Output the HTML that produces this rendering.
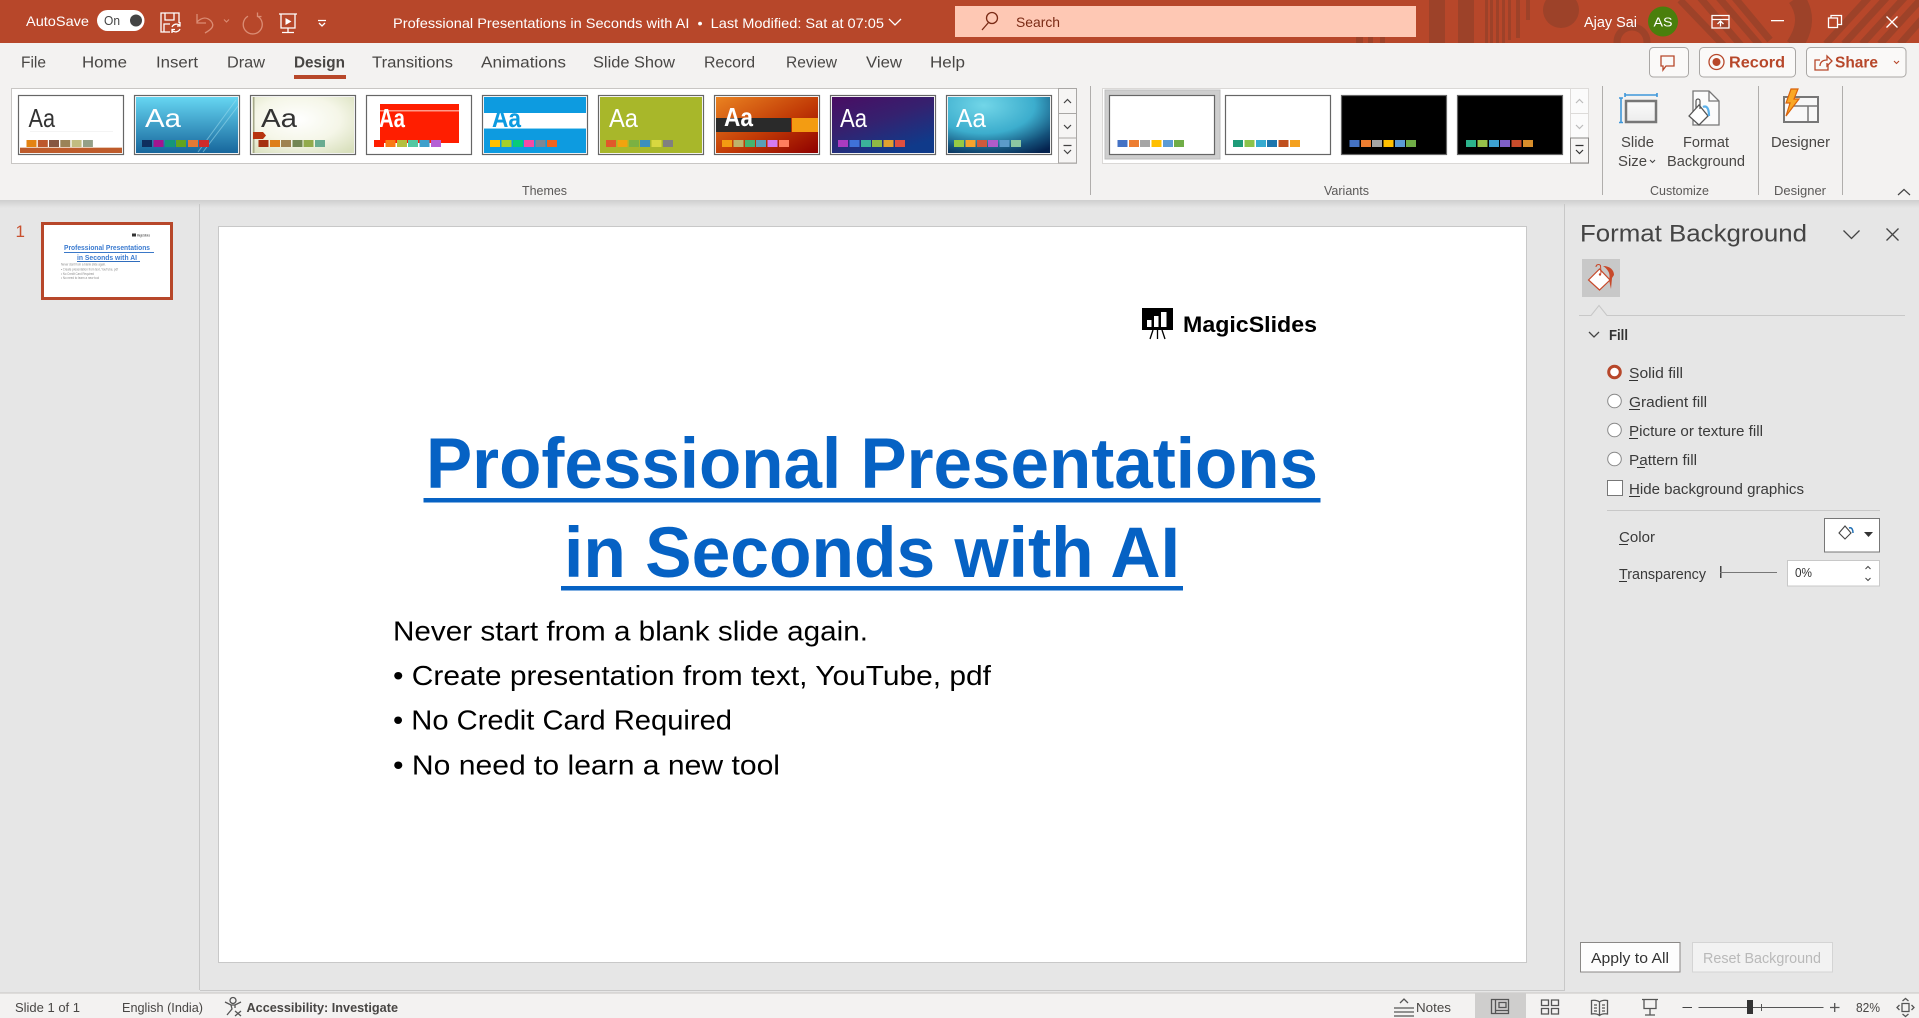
<!DOCTYPE html>
<html lang="en"><head><meta charset="utf-8"><title>Professional Presentations in Seconds with AI</title>
<style>
html,body{margin:0;padding:0;width:1919px;height:1018px;overflow:hidden;background:#e6e6e6}
svg{display:block}
text{font-family:"Liberation Sans",sans-serif;white-space:pre}
.w{fill:#fff}.g{fill:#444}.d{fill:#333}
.tab{font-size:15.5px;fill:#484644}
.rl{font-size:15px;fill:#484644}
.gl{font-size:12.5px;fill:#5a5857}
.st{font-size:13px;fill:#484644}
.pl{font-size:14.5px;fill:#3a3a3a}
.aa{font-size:26px}
.s{fill:none;stroke:#fff;stroke-width:1.3}
.ic{fill:none;stroke:#555;stroke-width:1.3}
.p{fill:#9d4229}
.th{fill:#fff;stroke:#666;stroke-width:1.2}
</style></head><body>
<svg width="1919" height="1018" viewBox="0 0 1919 1018" xmlns="http://www.w3.org/2000/svg">
<defs>
<linearGradient id="g2" x1="0" y1="0" x2="0" y2="1"><stop offset="0" stop-color="#66d6f2"/><stop offset="1" stop-color="#17669c"/></linearGradient>
<radialGradient id="g3" cx=".45" cy=".4" r=".75"><stop offset="0" stop-color="#fff"/><stop offset=".55" stop-color="#f5f6e8"/><stop offset="1" stop-color="#d9e0bd"/></radialGradient>
<linearGradient id="g7" x1="0" y1="0" x2="1" y2="1"><stop offset="0" stop-color="#ea8321"/><stop offset=".55" stop-color="#c13a06"/><stop offset="1" stop-color="#8e0000"/></linearGradient>
<linearGradient id="g8" x1="0" y1="0" x2=".6" y2="1"><stop offset="0" stop-color="#4a0d63"/><stop offset=".5" stop-color="#35216f"/><stop offset="1" stop-color="#0f3a8a"/></linearGradient>
<radialGradient id="g9" cx=".35" cy=".15" r="1"><stop offset="0" stop-color="#72d6e8"/><stop offset=".5" stop-color="#3cadcd"/><stop offset=".8" stop-color="#14517a"/><stop offset="1" stop-color="#04224e"/></radialGradient>
<linearGradient id="sh" x1="0" y1="0" x2="0" y2="1"><stop offset="0" stop-color="#cfcfcf"/><stop offset="1" stop-color="#e6e6e6"/></linearGradient>
<linearGradient id="ss" x1="0" y1="0" x2="0" y2="1"><stop offset="0" stop-color="#fbfbfb"/><stop offset="1" stop-color="#ececec"/></linearGradient>
<clipPath id="tbc"><rect x="0" y="0" width="1919" height="43"/></clipPath>
<clipPath id="t4"><rect x="368" y="97" width="102" height="56"/></clipPath>
</defs>

<!-- base -->
<rect width="1919" height="1018" fill="#e6e6e6"/>
<rect y="43" width="1919" height="157" fill="#f3f2f1"/>
<rect y="200" width="1919" height="8" fill="url(#sh)"/>

<!-- title bar -->
<rect width="1919" height="43" fill="#b7472a"/>
<g clip-path="url(#tbc)">
<rect class="p" x="1356" y="37" width="7" height="6"/><rect class="p" x="1368" y="37" width="5" height="6"/><rect class="p" x="1380" y="37" width="5" height="6"/>
<rect class="p" x="1429" y="0" width="16" height="43"/><rect class="p" x="1458" y="0" width="16" height="43"/>
<rect class="p" x="1485" y="0" width="3" height="43"/><rect class="p" x="1490" y="0" width="3" height="43"/><rect class="p" x="1496" y="0" width="3" height="43"/><rect class="p" x="1502" y="0" width="3" height="43"/><rect class="p" x="1508" y="0" width="3" height="40"/><rect class="p" x="1516" y="0" width="4" height="38"/><rect class="p" x="1526" y="0" width="4" height="20"/>
<circle class="p" cx="1561" cy="10" r="18"/>
<circle cx="1632" cy="42" r="15" fill="none" stroke="#9d4229" stroke-width="7"/>
<path fill="none" stroke="#9d4229" stroke-width="17" d="M1796-2Q1812 20 1794 46"/>
<g stroke="#9d4229" stroke-width="7"><path d="M1680 0l48 50M1697-6l48 56M1714 -8l48 56M1730 -8l40 48"/><path d="M1826 44l44-48M1844 44l44-48M1862 44l44-48M1880 44l44-48M1900 44l30-34"/></g>
</g>
<text class="w" x="26" y="26" font-size="14" textLength="63" lengthAdjust="spacingAndGlyphs">AutoSave</text>
<rect x="97" y="10" width="47.500" height="21" rx="10.500" fill="#fff"/>
<text x="104" y="25" font-size="12.500" fill="#444" textLength="16" lengthAdjust="spacingAndGlyphs">On</text>
<circle cx="136" cy="20.500" r="6" fill="#444"/>
<!-- save -->
<path class="s" d="M170 32h-9v-19h18v10M165 13v7h9v-7M164 32v-8h6"/>
<path class="s" d="M172 27a5 5 0 0 1 8-1.500M180 29a5 5 0 0 1-8 1.500M180 22v4h-3M172 33v-3.500h3"/>
<!-- undo/redo -->
<path fill="none" stroke="#db8d75" stroke-width="1.300" d="M197 14v9h9M197 22c5-5 10-5 14-1 4 5 1 8-6 12"/>
<path fill="none" stroke="#db8d75" stroke-width="1.100" d="M224 19.500l2.500 2.500 2.500-2.500"/>
<path fill="none" stroke="#db8d75" stroke-width="1.300" d="M248 16.200A9.500 9.500 0 1 0 257.500 16.200M257.500 12.500v4h4"/>
<!-- present -->
<path class="s" d="M279 14h18M281 14v14h14v-14M288 28v4M282 32.500h12"/><path fill="#fff" d="M285.500 18l6 3.500-6 3.500z"/>
<path class="s" d="M318 20.500h8M319 23l3 3 3-3"/>
<text class="w" x="393" y="28" font-size="14" textLength="491" lengthAdjust="spacingAndGlyphs">Professional Presentations in Seconds with AI  •  Last Modified: Sat at 07:05</text>
<path class="s" d="M889 19l6 6 6-6"/>
<!-- search -->
<rect x="955" y="6" width="461" height="31" fill="#fec8b4"/>
<g fill="none" stroke="#7a2a15" stroke-width="1.300"><circle cx="992" cy="18" r="5.500"/><path d="M988.500 22.500l-6.500 7.500"/></g>
<text x="1016" y="27" font-size="14" fill="#7a2a15" textLength="44" lengthAdjust="spacingAndGlyphs">Search</text>
<text class="w" x="1584" y="27" font-size="14.500" textLength="53" lengthAdjust="spacingAndGlyphs">Ajay Sai</text>
<circle cx="1663" cy="21.500" r="15" fill="#4a7f0c"/>
<text class="w" x="1653.500" y="26.500" font-size="12.500" textLength="19" lengthAdjust="spacingAndGlyphs">AS</text>
<path class="s" d="M1712 15.500h17v12.500h-17zM1712 19.500h17M1720.500 26.500v-5M1717.500 24l3-3 3 3"/>
<rect x="1771" y="20" width="13" height="1.300" fill="#fff"/>
<path class="s" d="M1828.500 18h9v9.500h-9zM1831 18v-2.500h10.500v9h-4"/>
<path class="s" d="M1886.500 16.500l11 11M1897.500 16.500l-11 11"/>

<!-- tabs -->
<text class="tab" x="21" y="67.500" textLength="25" lengthAdjust="spacingAndGlyphs">File</text>
<text class="tab" x="82" y="67.500" textLength="45" lengthAdjust="spacingAndGlyphs">Home</text>
<text class="tab" x="156" y="67.500" textLength="42" lengthAdjust="spacingAndGlyphs">Insert</text>
<text class="tab" x="227" y="67.500" textLength="38" lengthAdjust="spacingAndGlyphs">Draw</text>
<text class="tab" x="294" y="67.500" font-weight="700" textLength="51" lengthAdjust="spacingAndGlyphs">Design</text>
<rect x="294" y="75" width="52" height="4" fill="#b7472a"/>
<text class="tab" x="372" y="67.500" textLength="81" lengthAdjust="spacingAndGlyphs">Transitions</text>
<text class="tab" x="481" y="67.500" textLength="85" lengthAdjust="spacingAndGlyphs">Animations</text>
<text class="tab" x="593" y="67.500" textLength="82" lengthAdjust="spacingAndGlyphs">Slide Show</text>
<text class="tab" x="704" y="67.500" textLength="51" lengthAdjust="spacingAndGlyphs">Record</text>
<text class="tab" x="786" y="67.500" textLength="51" lengthAdjust="spacingAndGlyphs">Review</text>
<text class="tab" x="866" y="67.500" textLength="36" lengthAdjust="spacingAndGlyphs">View</text>
<text class="tab" x="930" y="67.500" textLength="35" lengthAdjust="spacingAndGlyphs">Help</text>

<!-- top right buttons -->
<g fill="#faf9f8" stroke="#a9a7a5"><rect x="1649.500" y="47.500" width="39" height="29.500" rx="4"/><rect x="1699.500" y="47.500" width="96" height="29.500" rx="4"/><rect x="1806.500" y="47.500" width="99.500" height="29.500" rx="4"/></g>
<path fill="none" stroke="#b7472a" stroke-width="1.300" d="M1661 56h13v10h-8l-3 4v-4h-2z"/>
<circle cx="1716.500" cy="62" r="7.500" fill="none" stroke="#b7472a" stroke-width="1.300"/><circle cx="1716.500" cy="62" r="4" fill="#b7472a"/>
<text x="1729" y="67.500" font-size="15.500" font-weight="700" fill="#b7472a" textLength="56" lengthAdjust="spacingAndGlyphs">Record</text>
<path fill="none" stroke="#b7472a" stroke-width="1.300" d="M1820 60h-5v10h13v-5M1820 66c0-4 3-6 7-6v-4l5 5-5 5v-3"/>
<text x="1835" y="67.500" font-size="15.500" font-weight="700" fill="#b7472a" textLength="43" lengthAdjust="spacingAndGlyphs">Share</text>
<path fill="none" stroke="#b7472a" stroke-width="1.100" d="M1894 61l2.500 2.500 2.500-2.500"/>

<!-- themes gallery -->
<rect x="11.500" y="88.500" width="1065" height="75" fill="#fff" stroke="#c8c6c4"/>
<g>
<rect class="th" x="18.500" y="95.500" width="105" height="59"/>
<rect class="th" x="134.500" y="95.500" width="105" height="59"/>
<rect class="th" x="250.500" y="95.500" width="105" height="59"/>
<rect class="th" x="366.500" y="95.500" width="105" height="59"/>
<rect class="th" x="482.500" y="95.500" width="105" height="59"/>
<rect class="th" x="598.500" y="95.500" width="105" height="59"/>
<rect class="th" x="714.500" y="95.500" width="105" height="59"/>
<rect class="th" x="830.500" y="95.500" width="105" height="59"/>
<rect class="th" x="946.500" y="95.500" width="105" height="59"/>
</g>
<!-- T1 -->
<rect x="30" y="131" width="83" height="1" fill="#f4f4f4"/><rect x="20" y="147" width="102" height="1" fill="#e8c9b4"/><rect x="20" y="148" width="102" height="5" fill="#be5b2b"/>
<text class="aa" x="28.500" y="127" fill="#333" textLength="26.500" lengthAdjust="spacingAndGlyphs">Aa</text>
<g><rect x="26.500" y="140" width="10" height="7" fill="#e48312"/><rect x="37.800" y="140" width="10" height="7" fill="#bd582c"/><rect x="49" y="140" width="10" height="7" fill="#865640"/><rect x="60.300" y="140" width="10" height="7" fill="#9b8357"/><rect x="71.600" y="140" width="10" height="7" fill="#c2bc80"/><rect x="82.900" y="140" width="10" height="7" fill="#94a088"/></g>
<!-- T2 -->
<rect x="136" y="97" width="102" height="56" fill="url(#g2)"/>
<path d="M198 152l38-52M203 152l35-46" stroke="#9ddcee" stroke-width="1" opacity=".55"/>
<text class="aa" x="145" y="127" fill="#fff" textLength="36" lengthAdjust="spacingAndGlyphs">Aa</text>
<g><rect x="142" y="140" width="10" height="7" fill="#0f2e5e"/><rect x="153.500" y="140" width="10" height="7" fill="#a3158f"/><rect x="165" y="140" width="10" height="7" fill="#14967c"/><rect x="176" y="140" width="10" height="7" fill="#63a41e"/><rect x="188" y="140" width="10" height="7" fill="#e47a35"/><rect x="199" y="140" width="10" height="7" fill="#ce2a2a"/></g>
<!-- T3 -->
<rect x="252" y="97" width="102" height="56" fill="url(#g3)"/>
<rect x="253" y="97" width="1.500" height="56" fill="#a6a98a"/>
<path d="M253 132h10l3 3.500-3 3.500h-10z" fill="#b7330f"/>
<text class="aa" x="261" y="127" fill="#333" textLength="36" lengthAdjust="spacingAndGlyphs">Aa</text>
<g><rect x="258.500" y="140" width="10" height="7" fill="#a53010"/><rect x="270" y="140" width="10" height="7" fill="#de7e18"/><rect x="281" y="140" width="10" height="7" fill="#9f8351"/><rect x="292.500" y="140" width="10" height="7" fill="#728653"/><rect x="303.500" y="140" width="10" height="7" fill="#92aa4c"/><rect x="315" y="140" width="10" height="7" fill="#6aac91"/></g>
<!-- T4 -->
<rect x="380" y="111" width="79" height="32" fill="#ff1e00"/><rect x="380" y="104" width="79" height="6" fill="#ff1e00"/><rect x="380" y="110" width="79" height="1.500" fill="#ff9a88"/>
<g clip-path="url(#t4)"><text class="aa" x="379" y="127" fill="#fff" font-weight="700" textLength="26" lengthAdjust="spacingAndGlyphs">Aa</text></g>
<g><rect x="374" y="140" width="10" height="7" fill="#ff1e00"/><rect x="385.500" y="140" width="10" height="7" fill="#f97a14"/><rect x="397" y="140" width="10" height="7" fill="#b4bf3e"/><rect x="408" y="140" width="10" height="7" fill="#53c7a2"/><rect x="419.500" y="140" width="10" height="7" fill="#3e9fcb"/><rect x="431" y="140" width="10" height="7" fill="#b560d5"/></g>
<!-- T5 -->
<rect x="484" y="97" width="102" height="56" fill="#0d9be0"/><rect x="484" y="113" width="102" height="15" fill="#fff"/><rect x="484" y="128" width="102" height="1" fill="#8fd2f0"/>
<text class="aa" x="492" y="127" fill="#0d9be0" font-weight="700" textLength="29" lengthAdjust="spacingAndGlyphs">Aa</text>
<g><rect x="490" y="140" width="10" height="7" fill="#ffc000"/><rect x="501.500" y="140" width="10" height="7" fill="#a5d028"/><rect x="513" y="140" width="10" height="7" fill="#08cc78"/><rect x="524" y="140" width="10" height="7" fill="#f74aa5"/><rect x="535.500" y="140" width="10" height="7" fill="#7c8796"/><rect x="547" y="140" width="10" height="7" fill="#f0641e"/></g>
<!-- T6 -->
<rect x="600" y="97" width="102" height="56" fill="#a8b72a"/>
<text class="aa" x="609" y="127" fill="#fff" textLength="29" lengthAdjust="spacingAndGlyphs">Aa</text>
<g><rect x="606" y="140" width="10" height="7" fill="#e0592a"/><rect x="617.500" y="140" width="10" height="7" fill="#f1a30e"/><rect x="629" y="140" width="10" height="7" fill="#7bb142"/><rect x="640" y="140" width="10" height="7" fill="#3d8fbe"/><rect x="651.500" y="140" width="10" height="7" fill="#d8d840"/><rect x="663" y="140" width="10" height="7" fill="#808080"/></g>
<!-- T7 -->
<rect x="716" y="97" width="102" height="56" fill="url(#g7)"/>
<rect x="716" y="118" width="75" height="14" fill="#2a2a2a"/><rect x="792" y="118" width="26" height="14" fill="#f39c12"/>
<text class="aa" x="724" y="126" fill="#fff" font-weight="700" textLength="29" lengthAdjust="spacingAndGlyphs">Aa</text>
<g><rect x="722" y="140" width="10" height="7" fill="#f39c12"/><rect x="733.500" y="140" width="10" height="7" fill="#beb36a"/><rect x="745" y="140" width="10" height="7" fill="#46b36f"/><rect x="756" y="140" width="10" height="7" fill="#5aa0b8"/><rect x="767.500" y="140" width="10" height="7" fill="#d47bf0"/><rect x="779" y="140" width="10" height="7" fill="#ff7f5e"/></g>
<!-- T8 -->
<rect x="832" y="97" width="102" height="56" fill="url(#g8)"/>
<text class="aa" x="840" y="127" fill="#fff" textLength="27" lengthAdjust="spacingAndGlyphs">Aa</text>
<g><rect x="838" y="140" width="10" height="7" fill="#aa3bc0"/><rect x="849.500" y="140" width="10" height="7" fill="#3f72d8"/><rect x="861" y="140" width="10" height="7" fill="#3bb39a"/><rect x="872" y="140" width="10" height="7" fill="#8fb845"/><rect x="883.500" y="140" width="10" height="7" fill="#e0a030"/><rect x="895" y="140" width="10" height="7" fill="#dd4f40"/></g>
<!-- T9 -->
<rect x="948" y="97" width="102" height="56" fill="url(#g9)"/>
<text class="aa" x="956" y="127" fill="#fff" textLength="30" lengthAdjust="spacingAndGlyphs">Aa</text>
<g><rect x="954" y="140" width="10" height="7" fill="#95c945"/><rect x="965.500" y="140" width="10" height="7" fill="#f5a32d"/><rect x="977" y="140" width="10" height="7" fill="#cf5a3d"/><rect x="988" y="140" width="10" height="7" fill="#af5cc9"/><rect x="999.500" y="140" width="10" height="7" fill="#5b9bc9"/><rect x="1011" y="140" width="10" height="7" fill="#8cc7a2"/></g>
<!-- gallery scroll -->
<g fill="#f6f5f4" stroke="#a9a7a5"><rect x="1058.500" y="88.500" width="18" height="25"/><rect x="1058.500" y="113.500" width="18" height="24.500"/><rect x="1058.500" y="138" width="18" height="25"/></g>
<g fill="none" stroke="#444" stroke-width="1.200"><path d="M1064 103l3.500-3.500 3.500 3.500M1064 125l3.500 3.500 3.500-3.500M1063.500 145.500h8M1064 150l3.500 3.500 3.500-3.500"/></g>

<rect x="1090" y="86" width="1" height="109" fill="#b0aeac"/>

<!-- variants -->
<rect x="1102.500" y="88.500" width="486" height="75" fill="#fff" stroke="#dad8d6"/>
<rect x="1105" y="90" width="115" height="69" fill="#cecece" stroke="#bdbdbd"/>
<rect class="th" x="1109.500" y="95.500" width="105" height="59"/><rect class="th" x="1225.500" y="95.500" width="105" height="59"/>
<rect x="1341.500" y="95.500" width="105" height="59" fill="#000" stroke="#666" stroke-width="1.200"/><rect x="1457.500" y="95.500" width="105" height="59" fill="#000" stroke="#666" stroke-width="1.200"/>
<g><rect x="1117.500" y="140" width="10" height="7" fill="#4472c4"/><rect x="1129" y="140" width="10" height="7" fill="#ed7d31"/><rect x="1140" y="140" width="10" height="7" fill="#a5a5a5"/><rect x="1151.500" y="140" width="10" height="7" fill="#ffc000"/><rect x="1163" y="140" width="10" height="7" fill="#5b9bd5"/><rect x="1174" y="140" width="10" height="7" fill="#70ad47"/></g>
<g><rect x="1233" y="140" width="10" height="7" fill="#1e9b78"/><rect x="1244.500" y="140" width="10" height="7" fill="#8bc34a"/><rect x="1256" y="140" width="10" height="7" fill="#35abd0"/><rect x="1267" y="140" width="10" height="7" fill="#1c75ad"/><rect x="1278.500" y="140" width="10" height="7" fill="#c0501f"/><rect x="1290" y="140" width="10" height="7" fill="#f4a11f"/></g>
<g><rect x="1349.500" y="140" width="10" height="7" fill="#4472c4"/><rect x="1361" y="140" width="10" height="7" fill="#ed7d31"/><rect x="1372" y="140" width="10" height="7" fill="#a5a5a5"/><rect x="1383.500" y="140" width="10" height="7" fill="#ffc000"/><rect x="1395" y="140" width="10" height="7" fill="#5b9bd5"/><rect x="1406" y="140" width="10" height="7" fill="#70ad47"/></g>
<g><rect x="1466" y="140" width="10" height="7" fill="#2cb38c"/><rect x="1477.500" y="140" width="10" height="7" fill="#97c24a"/><rect x="1489" y="140" width="10" height="7" fill="#3da1d1"/><rect x="1500" y="140" width="10" height="7" fill="#7e5fc7"/><rect x="1511.500" y="140" width="10" height="7" fill="#c94c2b"/><rect x="1523" y="140" width="10" height="7" fill="#d98e2b"/></g>
<g fill="#fbfbfb" stroke="#dddbd9"><rect x="1570.500" y="88.500" width="18" height="25"/><rect x="1570.500" y="113.500" width="18" height="24.500"/></g>
<rect x="1570.500" y="138" width="18" height="25" fill="#f6f5f4" stroke="#8a8886"/>
<g fill="none" stroke="#bcbcbc" stroke-width="1.200"><path d="M1576 103l3.500-3.500 3.500 3.500M1576 125l3.500 3.500 3.500-3.500"/></g>
<path fill="none" stroke="#333" stroke-width="1.200" d="M1575.500 145.500h8M1576 150l3.500 3.500 3.500-3.500"/>

<rect x="1602" y="86" width="1" height="109" fill="#b0aeac"/><rect x="1758" y="86" width="1" height="109" fill="#b0aeac"/><rect x="1842" y="86" width="1" height="109" fill="#b0aeac"/>

<!-- slide size icon -->
<path fill="none" stroke="#3e97da" stroke-width="1.600" d="M1625 95h32M1625 93v4M1657 93v4M1621 98v25M1619 98h4M1619 122.500h4"/>
<rect x="1626" y="101" width="30" height="21" fill="url(#ss)" stroke="#777" stroke-width="2.500"/>
<!-- format bg icon -->
<path fill="#fbfbfb" stroke="#777" stroke-width="1.300" d="M1693 91h16l10 10v24h-26z"/><path fill="none" stroke="#777" stroke-width="1.300" d="M1709 91v10h10"/>
<path fill="#fff" stroke="#555" stroke-width="1.300" d="M1689 116l10-11 9 11-9 9z"/><path fill="none" stroke="#555" stroke-width="1.200" d="M1696 108v-7a2 2 0 0 1 4 0v8"/>
<path fill="none" stroke="#5ab0ea" stroke-width="2.200" d="M1703 107c4-2 6 2 6 9"/>
<!-- designer icon -->
<rect x="1784" y="97" width="34" height="25" fill="#f8f8f8" stroke="#777" stroke-width="2"/><path fill="none" stroke="#777" stroke-width="1.500" d="M1793 106h25M1808 106v16"/>
<path fill="#f9a825" stroke="#d9630b" stroke-width="1.200" d="M1791 89h7l-4 10h5l-13 17 4-13h-4z"/>

<text class="rl" x="1621" y="147" textLength="33" lengthAdjust="spacingAndGlyphs">Slide</text>
<text class="rl" x="1618" y="166" textLength="29" lengthAdjust="spacingAndGlyphs">Size</text>
<path fill="none" stroke="#444" stroke-width="1.100" d="M1650 160l2.500 2.500 2.500-2.500"/>
<text class="rl" x="1683" y="147" textLength="46" lengthAdjust="spacingAndGlyphs">Format</text>
<text class="rl" x="1667" y="166" textLength="78" lengthAdjust="spacingAndGlyphs">Background</text>
<text class="rl" x="1771" y="147" textLength="59" lengthAdjust="spacingAndGlyphs">Designer</text>
<text class="gl" x="522" y="195" textLength="45" lengthAdjust="spacingAndGlyphs">Themes</text>
<text class="gl" x="1324" y="195" textLength="45" lengthAdjust="spacingAndGlyphs">Variants</text>
<text class="gl" x="1650" y="195" textLength="59" lengthAdjust="spacingAndGlyphs">Customize</text>
<text class="gl" x="1774" y="195" textLength="52" lengthAdjust="spacingAndGlyphs">Designer</text>
<path fill="none" stroke="#444" stroke-width="1.200" d="M1898 195l6-5.500 6 5.500"/>

<!-- panes -->
<rect x="199" y="204" width="1" height="786" fill="#c8c8c8"/>
<rect x="200" y="990" width="1364" height="1" fill="#c8c8c8"/>
<rect x="1564" y="204" width="1" height="787" fill="#c8c8c8"/>

<!-- thumbnail -->
<text x="15.500" y="237" font-size="17" fill="#c8502e">1</text>
<rect x="41" y="222" width="132" height="78" fill="#fff"/>
<rect x="42.500" y="223.500" width="129" height="75" fill="none" stroke="#b7472a" stroke-width="3"/>
<text x="64" y="250" font-size="7.500" font-weight="700" fill="#3b7bd0" textLength="86" lengthAdjust="spacingAndGlyphs">Professional Presentations</text>
<rect x="64" y="252" width="90" height="1" fill="#3a78c8"/>
<text x="77" y="260" font-size="7.500" font-weight="700" fill="#3b7bd0" textLength="60" lengthAdjust="spacingAndGlyphs">in Seconds with AI</text>
<rect x="77" y="261" width="63" height="1" fill="#2f6dbd"/>
<g fill="#8a8a8a" font-size="3.500"><text x="61" y="265.500" textLength="45" lengthAdjust="spacingAndGlyphs">Never start from a blank slide again.</text><text x="61" y="270.500" textLength="57" lengthAdjust="spacingAndGlyphs">• Create presentation from text, YouTube, pdf</text><text x="61" y="275" textLength="33" lengthAdjust="spacingAndGlyphs">• No Credit Card Required</text><text x="61" y="279" textLength="38" lengthAdjust="spacingAndGlyphs">• No need to learn a new tool</text></g>
<rect x="132" y="233.500" width="4" height="3" fill="#333"/><text x="137" y="236.500" font-size="3.500" font-weight="700" fill="#666" textLength="13" lengthAdjust="spacingAndGlyphs">MagicSlides</text>

<!-- slide -->
<rect x="218.500" y="226.500" width="1308" height="736" fill="#fff" stroke="#c8c8c8"/>
<!-- logo -->
<rect x="1142" y="308" width="31" height="22" fill="#000"/>
<rect x="1147" y="320" width="4.500" height="7" fill="#fff"/><rect x="1154" y="316" width="4.500" height="11" fill="#fff"/><rect x="1161" y="312" width="5.500" height="15" fill="#fff"/>
<path stroke="#000" stroke-width="1.300" d="M1153 330l-3 9M1157.500 330v9M1162 330l3 9"/>
<text x="1183" y="332" font-size="22" font-weight="700" fill="#000" textLength="134" lengthAdjust="spacingAndGlyphs">MagicSlides</text>
<!-- title -->
<text x="426" y="488" font-size="71" font-weight="700" fill="#0662c4" textLength="892" lengthAdjust="spacingAndGlyphs">Professional Presentations</text>
<rect x="423.500" y="498" width="897" height="4.500" fill="#0662c4"/>
<text x="564" y="577" font-size="71" font-weight="700" fill="#0662c4" textLength="616" lengthAdjust="spacingAndGlyphs">in Seconds with AI</text>
<rect x="561" y="586" width="622" height="4.500" fill="#0662c4"/>
<!-- body -->
<g font-size="28" fill="#000">
<text x="393" y="640.500" textLength="475" lengthAdjust="spacingAndGlyphs">Never start from a blank slide again.</text>
<text x="393" y="685" textLength="598" lengthAdjust="spacingAndGlyphs">• Create presentation from text, YouTube, pdf</text>
<text x="393" y="729.500" textLength="339" lengthAdjust="spacingAndGlyphs">• No Credit Card Required</text>
<text x="393" y="774.500" textLength="387" lengthAdjust="spacingAndGlyphs">• No need to learn a new tool</text>
</g>

<!-- format background pane -->
<text x="1580" y="241.500" font-size="24.500" fill="#444" textLength="227" lengthAdjust="spacingAndGlyphs">Format Background</text>
<path fill="none" stroke="#444" stroke-width="1.300" d="M1843.500 230.500l8 8 8-8"/>
<path fill="none" stroke="#444" stroke-width="1.300" d="M1886.500 228.500l12 12M1898.500 228.500l-12 12"/>
<rect x="1582" y="259" width="38" height="38" fill="#c8c8c8"/>
<path fill="#fff" stroke="#c8492a" stroke-width="1.200" d="M1588.500 280l11-11 10.500 11-10.500 10z"/>
<path fill="none" stroke="#c8492a" stroke-width="1" d="M1596 267a2.500 2.500 0 0 1 4.500-1.500l.5 8"/><circle cx="1600" cy="274.500" r="1.200" fill="#c8492a"/>
<path fill="#c8492a" d="M1603 266c7 0 11 4 11 9l-2 3-1 11c-1-5-2-8-1.500-12 .5-4-2-8-6.500-11z"/>
<path fill="none" stroke="#c8c8c8" d="M1579 315.500h12l8-10 8 10h298"/>
<path fill="#e6e6e6" d="M1592 316h14l-7-9z"/>
<path fill="none" stroke="#c8c8c8" d="M1591 315.500l8-10 8 10"/>
<path fill="none" stroke="#444" stroke-width="1.300" d="M1589 332l5 5 5-5"/>
<text x="1609" y="340" font-size="14.500" font-weight="700" fill="#333" textLength="19" lengthAdjust="spacingAndGlyphs">Fill</text>
<circle cx="1614.500" cy="372" r="5.800" fill="#fff" stroke="#b7472a" stroke-width="3"/>
<g fill="#fff" stroke="#888"><circle cx="1614.500" cy="401" r="6.800"/><circle cx="1614.500" cy="430" r="6.800"/><circle cx="1614.500" cy="459" r="6.800"/></g>
<rect x="1607.500" y="480.500" width="15" height="15" fill="#fff" stroke="#777"/>
<text class="pl" x="1629" y="378" textLength="54" lengthAdjust="spacingAndGlyphs">Solid fill</text><rect x="1629" y="380" width="9" height="1" fill="#333"/>
<text class="pl" x="1629" y="407" textLength="78" lengthAdjust="spacingAndGlyphs">Gradient fill</text><rect x="1629" y="409" width="11" height="1" fill="#333"/>
<text class="pl" x="1629" y="436" textLength="134" lengthAdjust="spacingAndGlyphs">Picture or texture fill</text><rect x="1629" y="438" width="9" height="1" fill="#333"/>
<text class="pl" x="1629" y="465" textLength="68" lengthAdjust="spacingAndGlyphs">Pattern fill</text><rect x="1637" y="467" width="8" height="1" fill="#333"/>
<text class="pl" x="1629" y="494" textLength="175" lengthAdjust="spacingAndGlyphs">Hide background graphics</text><rect x="1629" y="496" width="11" height="1" fill="#333"/>
<rect x="1607" y="510" width="273" height="1" fill="#c8c8c8"/>
<text class="pl" x="1619" y="542" textLength="36" lengthAdjust="spacingAndGlyphs">Color</text><rect x="1619" y="544" width="9" height="1" fill="#333"/>
<rect x="1824.500" y="518.500" width="55" height="33.500" fill="#fff" stroke="#777"/>
<path fill="#fff" stroke="#444" stroke-width="1.100" d="M1839 533l6-7 6 7-6 6z"/><path fill="none" stroke="#1f6fb5" stroke-width="1.500" d="M1849 528c3-1 4 2 4 5"/>
<path fill="#333" d="M1864 532h9l-4.500 5z"/>
<text class="pl" x="1619" y="579" textLength="87" lengthAdjust="spacingAndGlyphs">Transparency</text><rect x="1619" y="581" width="8" height="1" fill="#333"/>
<rect x="1720" y="566" width="1.500" height="12" fill="#444"/><rect x="1720" y="572" width="57" height="1" fill="#777"/>
<rect x="1787.500" y="560.500" width="92" height="25.500" fill="#fff" stroke="#c8c8c8"/>
<text x="1795" y="577" font-size="13" fill="#333" textLength="17" lengthAdjust="spacingAndGlyphs">0%</text>
<path fill="none" stroke="#444" stroke-width="1" d="M1865.500 569l2.500-2.500 2.500 2.500M1865.500 578l2.500 2.500 2.500-2.500"/>

<!-- pane buttons -->
<rect x="1580.500" y="942.500" width="99.500" height="29.500" fill="#fdfdfd" stroke="#8a8886"/>
<text x="1591" y="963" font-size="14.500" fill="#333" textLength="78" lengthAdjust="spacingAndGlyphs">Apply to All</text>
<rect x="1692.500" y="942.500" width="140" height="29.500" fill="#f2f2f2" stroke="#d4d4d4"/>
<text x="1703" y="963" font-size="14.500" fill="#b9b9b9" textLength="118" lengthAdjust="spacingAndGlyphs">Reset Background</text>

<!-- status bar -->
<rect y="993" width="1919" height="25" fill="#f3f2f1"/><rect y="992.500" width="1919" height="1" fill="#c8c6c4"/>
<text class="st" x="15" y="1012" textLength="65" lengthAdjust="spacingAndGlyphs">Slide 1 of 1</text>
<text class="st" x="122" y="1012" textLength="81" lengthAdjust="spacingAndGlyphs">English (India)</text>
<path class="ic" d="M230 1000.500a3 3 0 1 1 6 0 3 3 0 0 1-6 0zM225 1002l6 3h4l6-3M231 1005l1 4-5 6M235 1005v3M235 1011l6 5M241 1011l-6 5"/>
<text class="st" x="246.500" y="1012" font-weight="700" textLength="151.500" lengthAdjust="spacingAndGlyphs">Accessibility: Investigate</text>
<path class="ic" d="M1394 1008h20M1394 1012h20M1394 1016h20M1400 1003l4-4 4 4"/>
<text class="st" x="1416" y="1012" textLength="35" lengthAdjust="spacingAndGlyphs">Notes</text>
<rect x="1475" y="993" width="51" height="25" fill="#cfcecd"/>
<path class="ic" stroke-width="1.500" d="M1491.500 999.500h17v14h-17zM1495.500 999.500v14M1499 1002.500h7v5h-7zM1495.500 1010.500h13"/>
<path class="ic" d="M1541.500 1000h7v5.500h-7zM1551.500 1000h7v5.500h-7zM1541.500 1008.500h7v5.500h-7zM1551.500 1008.500h7v5.500h-7z"/>
<path class="ic" d="M1599.500 1002c-2-1.500-5-2-8-1.500v13.500c3-.5 6 0 8 1.500 2-1.500 5-2 8-1.500v-13.500c-3-.5-6 0-8 1.500zM1599.500 1002v13.500M1594 1005h3M1594 1008h3M1594 1011h3M1602 1005h3M1602 1008h3M1602 1011h3"/>
<path class="ic" d="M1642 999.500h16M1644 999.500v9h12v-9M1650 1008.500v6M1645 1015h10"/>
<rect x="1682.500" y="1007" width="9.500" height="1" fill="#444"/>
<rect x="1698.500" y="1007" width="125" height="1" fill="#555"/>
<rect x="1747" y="1000" width="6" height="14" fill="#333"/><rect x="1761" y="1004" width="1" height="7" fill="#555"/>
<path class="ic" d="M1830 1007.500h9.500M1834.700 1003v9"/>
<text class="st" x="1856" y="1012" textLength="24" lengthAdjust="spacingAndGlyphs">82%</text>
<path class="ic" d="M1902 1003.500h7v8h-7zM1902.500 1001l3-2.500 3 2.500M1902.500 1014l3 2.500 3-2.500M1899.500 1005l-2.500 2.500 2.500 2.500M1911.500 1005l2.500 2.500-2.500 2.500"/>
</svg>
</body></html>
